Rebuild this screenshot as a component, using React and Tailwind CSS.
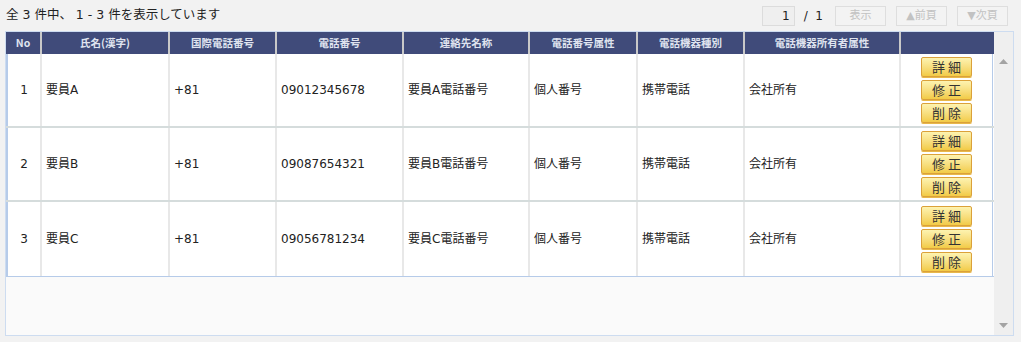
import React from 'react';

const COLS = 'grid-cols-[34px_128px_107px_127px_126px_108px_107px_156px_94px]';

const headers = ['No', '氏名(漢字)', '国際電話番号', '電話番号', '連絡先名称', '電話番号属性', '電話機器種別', '電話機器所有者属性', ''];

const rows = [
  { no: 1, name: '要員A', intl: '+81', tel: '09012345678', contact: '要員A電話番号' },
  { no: 2, name: '要員B', intl: '+81', tel: '09087654321', contact: '要員B電話番号' },
  { no: 3, name: '要員C', intl: '+81', tel: '09056781234', contact: '要員C電話番号' },
];

const PagerButton = ({ children }) => (
  <button
    type="button"
    className="w-[51px] h-[20px] border border-[#dedede] bg-[#f3f3f3] text-[11px] text-[#c2c2c2] leading-none"
  >
    {children}
  </button>
);

const ActionButton = ({ children }) => (
  <button
    type="button"
    className="w-[51px] h-[20px] rounded-[2px] border border-[#dba13a] bg-gradient-to-b from-[#fdf3b0] to-[#f2cb45] text-[13px] text-[#333] leading-none tracking-[3px] pl-[3px] shadow-[0_1px_0_#e8b84a]"
  >
    {children}
  </button>
);

// text cell in a data row
const Cell = ({ children }) => (
  <div className="flex items-center pl-[4px] border-l-2 border-[#e8e8e8]">{children}</div>
);

export default function App() {
  return (
    <div
      className="w-[1021px] h-[342px] bg-[#f2f2f2] overflow-hidden text-[#222]"
      style={{ fontFamily: '"DejaVu Sans", "Noto Sans CJK JP", sans-serif' }}
    >
      {/* top bar */}
      <div className="h-[31px] flex items-center justify-between pl-[6px] pr-[13px]">
        <div className="text-[12.5px] whitespace-pre">全 3 件中、 1 - 3 件を表示しています</div>
        <div className="flex items-center">
          <div className="w-[33px] h-[20px] bg-[#efefef] border border-[#dcdcdc] text-[12px] text-right pr-[4px] leading-[18px]">1</div>
          <span className="text-[12px] ml-[9px] mr-[12px] whitespace-pre">/  1</span>
          <PagerButton>表示</PagerButton>
          <div className="w-[10px]" />
          <PagerButton>▲前頁</PagerButton>
          <div className="w-[10px]" />
          <PagerButton>▼次頁</PagerButton>
        </div>
      </div>

      {/* table frame */}
      <div className="ml-[5px] w-[1009px] h-[305px] border border-[#cddcf0] bg-[#fafafa] flex">
        <div className="w-[988px] flex flex-col">
          <div className={`grid ${COLS} h-[22px] bg-[#404b7a]`}>
            {headers.map((h, i) => (
              <div
                key={i}
                className={`flex items-center justify-center text-[10.5px] font-bold text-[#dfe3ef] ${i > 0 ? 'border-l-2 border-[#c9c9c9]' : ''}`}
                style={{ fontFamily: '"Noto Sans CJK JP", "DejaVu Sans", sans-serif' }}
              >
                {h}
              </div>
            ))}
          </div>
          <div className="border-b border-[#b6cbe9] bg-white">
            {rows.map((r, i) => (
              <div
                key={r.no}
                className={`grid ${COLS} h-[74px] text-[12px] ${i < rows.length - 1 ? 'border-b-2 border-[#d5dcdc]' : ''}`}
              >
                <div className="flex items-center justify-center border-l-2 border-[#b6cbe9]">{r.no}</div>
                <Cell>{r.name}</Cell>
                <Cell>{r.intl}</Cell>
                <Cell>{r.tel}</Cell>
                <Cell>{r.contact}</Cell>
                <Cell>個人番号</Cell>
                <Cell>携帯電話</Cell>
                <Cell>会社所有</Cell>
                <div className="flex flex-col items-center justify-center gap-[3px] border-l-2 border-r border-l-[#e8e8e8] border-r-[#b6cbe9]">
                  <ActionButton>詳細</ActionButton>
                  <ActionButton>修正</ActionButton>
                  <ActionButton>削除</ActionButton>
                </div>
              </div>
            ))}
          </div>
        </div>

        {/* scrollbar */}
        <div className="flex-1 bg-[#efefef] flex flex-col items-center justify-between pt-[27px] pb-[7px]">
          <svg width="9" height="5" viewBox="0 0 9 5"><path d="M4.5 0 L9 5 L0 5 Z" fill="#a3a3a3" /></svg>
          <svg width="9" height="5" viewBox="0 0 9 5"><path d="M0 0 L9 0 L4.5 5 Z" fill="#a3a3a3" /></svg>
        </div>
      </div>
    </div>
  );
}
